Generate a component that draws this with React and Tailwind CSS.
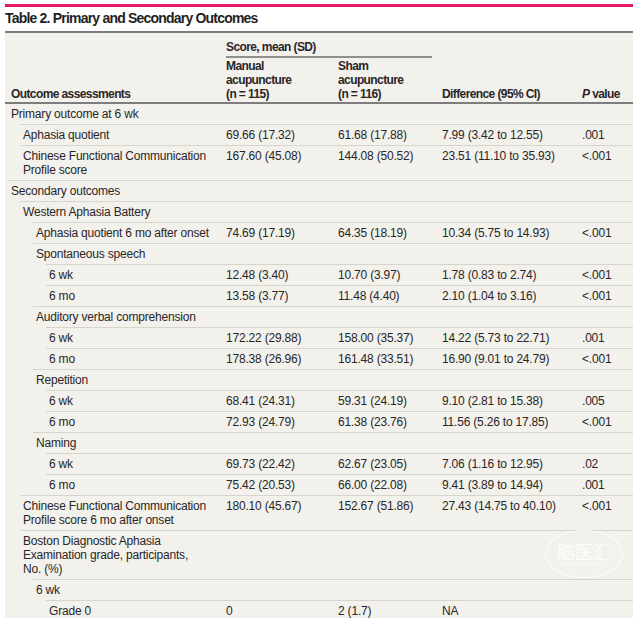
import React from 'react';

const rows = [
  [0, ['Primary outcome at 6 wk']],
  [1, ['Aphasia quotient'], '69.66 (17.32)', '61.68 (17.88)', '7.99 (3.42 to 12.55)', '.001'],
  [1, ['Chinese Functional Communication', 'Profile score'], '167.60 (45.08)', '144.08 (50.52)', '23.51 (11.10 to 35.93)', '<.001'],
  [0, ['Secondary outcomes']],
  [1, ['Western Aphasia Battery']],
  [2, ['Aphasia quotient 6 mo after onset'], '74.69 (17.19)', '64.35 (18.19)', '10.34 (5.75 to 14.93)', '<.001'],
  [2, ['Spontaneous speech']],
  [3, ['6 wk'], '12.48 (3.40)', '10.70 (3.97)', '1.78 (0.83 to 2.74)', '<.001'],
  [3, ['6 mo'], '13.58 (3.77)', '11.48 (4.40)', '2.10 (1.04 to 3.16)', '<.001'],
  [2, ['Auditory verbal comprehension']],
  [3, ['6 wk'], '172.22 (29.88)', '158.00 (35.37)', '14.22 (5.73 to 22.71)', '.001'],
  [3, ['6 mo'], '178.38 (26.96)', '161.48 (33.51)', '16.90 (9.01 to 24.79)', '<.001'],
  [2, ['Repetition']],
  [3, ['6 wk'], '68.41 (24.31)', '59.31 (24.19)', '9.10 (2.81 to 15.38)', '.005'],
  [3, ['6 mo'], '72.93 (24.79)', '61.38 (23.76)', '11.56 (5.26 to 17.85)', '<.001'],
  [2, ['Naming']],
  [3, ['6 wk'], '69.73 (22.42)', '62.67 (23.05)', '7.06 (1.16 to 12.95)', '.02'],
  [3, ['6 mo'], '75.42 (20.53)', '66.00 (22.08)', '9.41 (3.89 to 14.94)', '.001'],
  [1, ['Chinese Functional Communication', 'Profile score 6 mo after onset'], '180.10 (45.67)', '152.67 (51.86)', '27.43 (14.75 to 40.10)', '<.001'],
  [1, ['Boston Diagnostic Aphasia', 'Examination grade, participants,', 'No. (%)']],
  [2, ['6 wk']],
  [3, ['Grade 0'], '0', '2 (1.7)', 'NA'],
];

// indent per level: margin of the row line + width left for the label column
const indent = {
  0: 'ml-[3px]',
  1: 'ml-[15px]',
  2: 'ml-[28px]',
  3: 'ml-[41px]',
};
const labelW = {
  0: 'w-[218px]',
  1: 'w-[206px]',
  2: 'w-[193px]',
  3: 'w-[180px]',
};

const Row = ({ level, label, a, b, diff, p, first }) => (
  <div className={`flex ${indent[level]} ${first ? '' : 'border-t border-[#d6d4cb]'} pt-[3px] pb-[3px]`}>
    <div className={`${labelW[level]} shrink-0 pl-[3px]`}>
      {label.map((l, i) => (
        <div key={i}>{l}</div>
      ))}
    </div>
    <div className="w-[112px] shrink-0">{a}</div>
    <div className="w-[104px] shrink-0">{b}</div>
    <div className="w-[140px] shrink-0">{diff}</div>
    <div className="flex-1">{p}</div>
  </div>
);

const App = () => {
  return (
    <div
      className="relative w-[638px] h-[618px] overflow-hidden bg-white px-[5px] text-[#2a2627]"
      style={{ fontFamily: "'Liberation Sans', Arial, sans-serif" }}
    >
      <div className="mt-[4px] h-[3px] bg-[#e5186c]" />
      <div className="mt-[3px] text-[14px] leading-[16px] font-bold tracking-[-0.8px] text-[#231f20]">
        Table 2. Primary and Secondary Outcomes
      </div>

      <div className="mt-[5px] bg-[#f2f1ec] text-[12px] leading-[14px] tracking-[-0.2px] whitespace-nowrap">
        {/* header */}
        <div className="flex items-end border-t-2 border-b-2 border-[#7d7d7d] font-bold tracking-[-0.6px]">
          <div className="w-[221px] shrink-0 pl-[6px] pb-[1px]">Outcome assessments</div>
          <div className="w-[216px] shrink-0">
            <div className="mr-[10px] pt-[7px] pb-[2px] border-b-2 border-[#8f8f8f]">Score, mean (SD)</div>
            <div className="flex pt-[1px] pb-[1px]">
              <div className="w-[112px]">
                <div>Manual</div>
                <div>acupuncture</div>
                <div>(n = 115)</div>
              </div>
              <div className="w-[104px]">
                <div>Sham</div>
                <div>acupuncture</div>
                <div>(n = 116)</div>
              </div>
            </div>
          </div>
          <div className="w-[140px] shrink-0 pb-[1px]">Difference (95% CI)</div>
          <div className="flex-1 pb-[1px]">
            <span className="italic">P</span> value
          </div>
        </div>

        {rows.map(([level, label, a, b, diff, p], i) => (
          <Row key={i} level={level} label={label} a={a} b={b} diff={diff} p={p} first={i === 0} />
        ))}
      </div>

      {/* watermark */}
      <div className="absolute left-[545px] top-[530px] w-[78px] h-[48px] rounded-[50%] border-[1.5px] border-white/80 flex flex-col items-center justify-center text-white/80">
        <div className="text-[18px] leading-[20px]" style={{ fontFamily: "'Noto Sans CJK SC', sans-serif" }}>脑医汇</div>
        <div className="text-[5px] leading-[6px] tracking-[1px]">brainmed.com</div>
      </div>
    </div>
  );
};

export default App;
